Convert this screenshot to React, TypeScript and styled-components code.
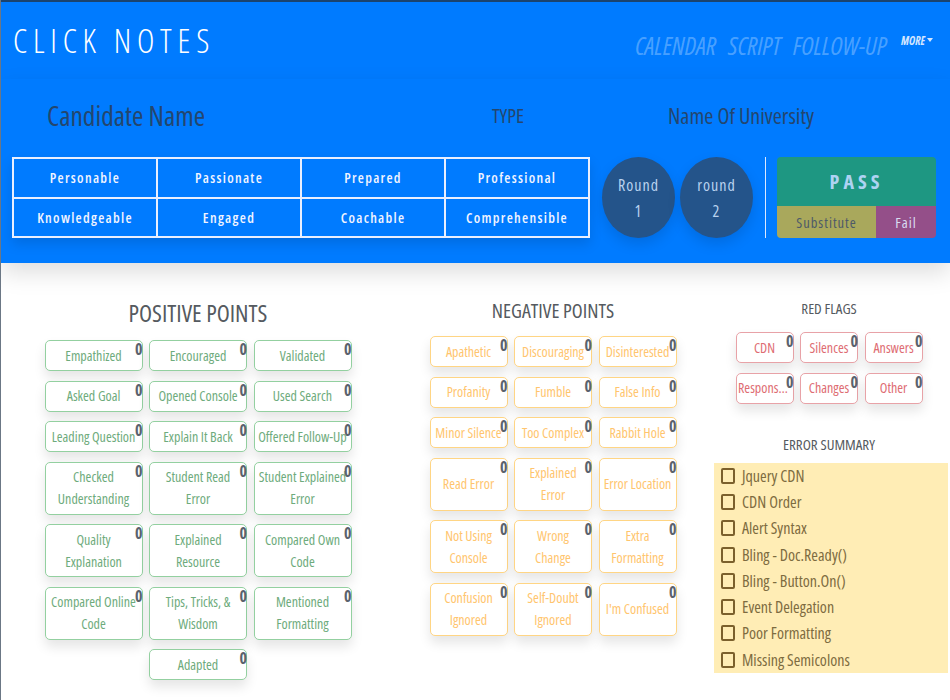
import React from 'react';
import styled, { createGlobalStyle } from 'styled-components';

const FONT = `"Open Sans", "Noto Sans", "Liberation Sans", sans-serif`;

const GlobalStyle = createGlobalStyle`
  html, body { margin: 0; padding: 0; background: #fff; }
  body { font-family: ${FONT}; font-stretch: 80%; }
  * { box-sizing: border-box; }
`;

const Page = styled.div`
  width: 950px;
  min-height: 700px;
  background: #fff;
  border-left: 1px solid #6b7785;
  overflow: hidden;
`;

const TopBar = styled.header`
  height: 79px;
  background: #007bff;
  border-top: 2px solid #1b436e;
  display: flex;
  align-items: center;
  justify-content: space-between;
  padding: 0 17px 0 12px;
`;

const Brand = styled.h1`
  margin: 0;
  font-weight: 300;
  font-size: 33px;
  letter-spacing: 5.8px;
  color: #fff;
`;

const Nav = styled.nav`
  display: flex;
  align-items: flex-start;
  gap: 12px;
  margin-top: 8px;
`;

const NavLink = styled.a`
  font-style: italic;
  font-size: 25px;
  line-height: 1.2;
  color: rgba(255, 255, 255, 0.3);
  text-decoration: none;
`;

const More = styled.span`
  font-size: 11.5px;
  font-weight: 700;
  font-style: italic;
  color: #d3e6ff;
  margin-top: 3px;
  margin-left: 2px;
  display: flex;
  align-items: center;
  gap: 2px;
`;

const Caret = styled.span`
  width: 0;
  height: 0;
  border-left: 3.5px solid transparent;
  border-right: 3.5px solid transparent;
  border-top: 4px solid #d3e6ff;
`;

const Hero = styled.section`
  background: #007bff;
  height: 184px;
  padding: 0 0 0 11px;
  box-shadow: 0 10px 22px rgba(0, 0, 0, 0.13);
  position: relative;
  z-index: 1;
`;

const InfoRow = styled.div`
  display: grid;
  grid-template-columns: 445px 176px 1fr;
  align-items: center;
  height: 72px;
  padding-left: 35px;
  margin-bottom: 6px;
  color: #24466e;
`;

const CandidateName = styled.div`
  font-size: 27.5px;
`;

const InfoLabel = styled.div<{ $size: number }>`
  font-size: ${(p) => p.$size}px;
`;

const Controls = styled.div`
  display: flex;
  height: 81px;
  align-items: stretch;
  & > * { flex: none; }
`;

const TraitGrid = styled.div`
  width: 578px;
  display: grid;
  grid-template-columns: repeat(4, 1fr);
  grid-template-rows: repeat(2, 1fr);
  gap: 2px;
  padding: 2px;
  background: #e9efff;
  box-shadow: 0 6px 12px rgba(0, 0, 0, 0.12);
`;

const Trait = styled.div`
  background: #007bff;
  color: #f1f4ff;
  font-size: 14px;
  font-weight: 600;
  letter-spacing: 1.3px;
  display: flex;
  align-items: center;
  justify-content: center;
`;

const Rounds = styled.div`
  display: flex;
  gap: 5px;
  margin-left: 12px;
`;

const RoundBubble = styled.div`
  width: 73px;
  border-radius: 50%;
  background: #24548a;
  color: #b9d2ef;
  font-size: 16px;
  letter-spacing: 1px;
  line-height: 26px;
  display: flex;
  flex-direction: column;
  align-items: center;
  justify-content: center;
  box-shadow: 0 6px 14px rgba(0, 0, 0, 0.12);
`;

const Divider = styled.div`
  width: 1px;
  background: #dce8ff;
  margin-left: 12px;
`;

const Verdict = styled.div`
  width: 159px;
  margin-left: 11px;
  border-radius: 4px;
  overflow: hidden;
  display: grid;
  grid-template-columns: 99px 1fr;
  grid-template-rows: 49px 1fr;
`;

const VerdictCell = styled.div<{ $bg: string; $fg: string; $wide?: boolean; $big?: boolean }>`
  grid-column: ${(p) => (p.$wide ? '1 / 3' : 'auto')};
  background: ${(p) => p.$bg};
  color: ${(p) => p.$fg};
  font-size: ${(p) => (p.$big ? '20px' : '14.5px')};
  font-weight: ${(p) => (p.$big ? 700 : 400)};
  letter-spacing: ${(p) => (p.$big ? '4px' : '1px')};
  display: flex;
  align-items: center;
  justify-content: center;
`;

const Main = styled.main`
  display: flex;
  align-items: flex-start;
  padding: 38px 0 0 43px;
`;

const Section = styled.section<{ $w: number; $ml?: number }>`
  width: ${(p) => p.$w}px;
  margin-left: ${(p) => p.$ml || 0}px;
  display: flex;
  flex-direction: column;
`;

const Title = styled.h2<{ $size: number; $mt?: number; $mb?: number }>`
  margin: ${(p) => p.$mt || 0}px 0 ${(p) => (p.$mb === undefined ? 15 : p.$mb)}px;
  font-size: ${(p) => p.$size}px;
  font-weight: 400;
  line-height: 1;
  color: #555a60;
  text-align: center;
`;

const TallyGrid = styled.div<{ $col: number }>`
  display: grid;
  grid-template-columns: repeat(3, ${(p) => p.$col}px);
  column-gap: 6.5px;
  row-gap: 9.5px;
  justify-content: center;
`;

type Tone = 'good' | 'bad' | 'flag';
const tones: Record<Tone, { border: string; text: string; pad: string }> = {
  good: { border: '#93d0a0', text: '#6eab7c', pad: '5px' },
  bad: { border: '#ffd584', text: '#ffc56e', pad: '5px' },
  flag: { border: '#e8a2a7', text: '#de6c72', pad: '1px' },
};

const Tally = styled.button<{ $tone: Tone }>`
  position: relative;
  min-height: 31px;
  background: #fff;
  border: 1.5px solid ${(p) => tones[p.$tone].border};
  border-radius: 5px;
  color: ${(p) => tones[p.$tone].text};
  font-family: ${FONT};
  font-stretch: 80%;
  font-size: 14px;
  line-height: 22px;
  padding: 3.5px ${(p) => tones[p.$tone].pad};
  white-space: pre;
  text-align: center;
  display: flex;
  align-items: center;
  justify-content: center;
  box-shadow: 0 7px 12px rgba(0, 0, 0, 0.1);
`;

const Clip = styled.span`
  display: block;
  width: 50px;
  overflow: hidden;
  text-overflow: ellipsis;
  margin-right: 3px;
`;

const Count = styled.span`
  position: absolute;
  top: 0;
  right: -1px;
  font-size: 16px;
  font-weight: 700;
  line-height: 1;
  color: #5a626d;
`;

const Summary = styled.ul`
  list-style: none;
  margin: 0;
  padding: 0 0 0 7px;
  background: #ffedb5;
  width: 234px;
  height: 210px;
`;

const SummaryItem = styled.li`
  display: flex;
  align-items: center;
  gap: 7px;
  height: 26.3px;
  font-size: 16px;
  color: #7d6b40;
`;

const Box = styled.span`
  width: 14px;
  height: 16px;
  border: 2px solid #7b602c;
  border-radius: 2px;
  flex: none;
`;

const positives = [
  'Empathized', 'Encouraged', 'Validated',
  'Asked Goal', 'Opened Console', 'Used Search',
  'Leading Question', 'Explain It Back', 'Offered Follow-Up',
  'Checked\nUnderstanding', 'Student Read\nError', 'Student Explained\nError',
  'Quality\nExplanation', 'Explained\nResource', 'Compared Own\nCode',
  'Compared Online\nCode', 'Tips, Tricks, &\nWisdom', 'Mentioned\nFormatting',
];

const negatives = [
  'Apathetic', 'Discouraging', 'Disinterested',
  'Profanity', 'Fumble', 'False Info',
  'Minor Silence', 'Too Complex', 'Rabbit Hole',
  'Read Error', 'Explained\nError', 'Error Location',
  'Not Using\nConsole', 'Wrong\nChange', 'Extra\nFormatting',
  'Confusion\nIgnored', 'Self-Doubt\nIgnored', "I'm Confused",
];

const flags = ['CDN', 'Silences', 'Answers', 'Responses', 'Changes', 'Other'];

const errors = [
  'Jquery CDN', 'CDN Order', 'Alert Syntax', 'Bling - Doc.Ready()',
  'Bling - Button.On()', 'Event Delegation', 'Poor Formatting', 'Missing Semicolons',
];

const traits = [
  'Personable', 'Passionate', 'Prepared', 'Professional',
  'Knowledgeable', 'Engaged', 'Coachable', 'Comprehensible',
];

export default function App() {
  return (
    <Page>
      <GlobalStyle />
      <TopBar>
        <Brand>CLICK NOTES</Brand>
        <Nav>
          <NavLink>CALENDAR</NavLink>
          <NavLink>SCRIPT</NavLink>
          <NavLink>FOLLOW-UP</NavLink>
          <More>MORE<Caret /></More>
        </Nav>
      </TopBar>
      <Hero>
        <InfoRow>
          <CandidateName>Candidate Name</CandidateName>
          <InfoLabel $size={20}>TYPE</InfoLabel>
          <InfoLabel $size={22}>Name Of University</InfoLabel>
        </InfoRow>
        <Controls>
          <TraitGrid>
            {traits.map((t) => <Trait key={t}>{t}</Trait>)}
          </TraitGrid>
          <Rounds>
            <RoundBubble><span>Round</span><span>1</span></RoundBubble>
            <RoundBubble><span>round</span><span>2</span></RoundBubble>
          </Rounds>
          <Divider />
          <Verdict>
            <VerdictCell $wide $big $bg="#1e9782" $fg="#aed3f3">PASS</VerdictCell>
            <VerdictCell $bg="#a9a85c" $fg="#4e5a68">Substitute</VerdictCell>
            <VerdictCell $bg="#944f89" $fg="#d9dcf2">Fail</VerdictCell>
          </Verdict>
        </Controls>
      </Hero>
      <Main>
        <Section $w={308}>
          <Title $size={24}>POSITIVE POINTS</Title>
          <TallyGrid $col={98}>
            {positives.map((p) => (
              <Tally key={p} $tone="good">{p}<Count>0</Count></Tally>
            ))}
            <span />
            <Tally $tone="good">Adapted<Count>0</Count></Tally>
          </TallyGrid>
        </Section>
        <Section $w={248} $ml={77}>
          <Title $size={20}>NEGATIVE POINTS</Title>
          <TallyGrid $col={78}>
            {negatives.map((p) => (
              <Tally key={p} $tone="bad">{p}<Count>0</Count></Tally>
            ))}
          </TallyGrid>
        </Section>
        <Section $w={230} $ml={37}>
          <Title $size={15} $mb={16}>RED FLAGS</Title>
          <TallyGrid $col={58}>
            {flags.map((f) => (
              <Tally key={f} $tone="flag">
                {f === 'Responses' ? <Clip>{f}</Clip> : f}
                <Count>0</Count>
              </Tally>
            ))}
          </TallyGrid>
          <Title $size={15} $mt={33} $mb={11}>ERROR SUMMARY</Title>
          <Summary>
            {errors.map((e) => (
              <SummaryItem key={e}><Box />{e}</SummaryItem>
            ))}
          </Summary>
        </Section>
      </Main>
    </Page>
  );
}
